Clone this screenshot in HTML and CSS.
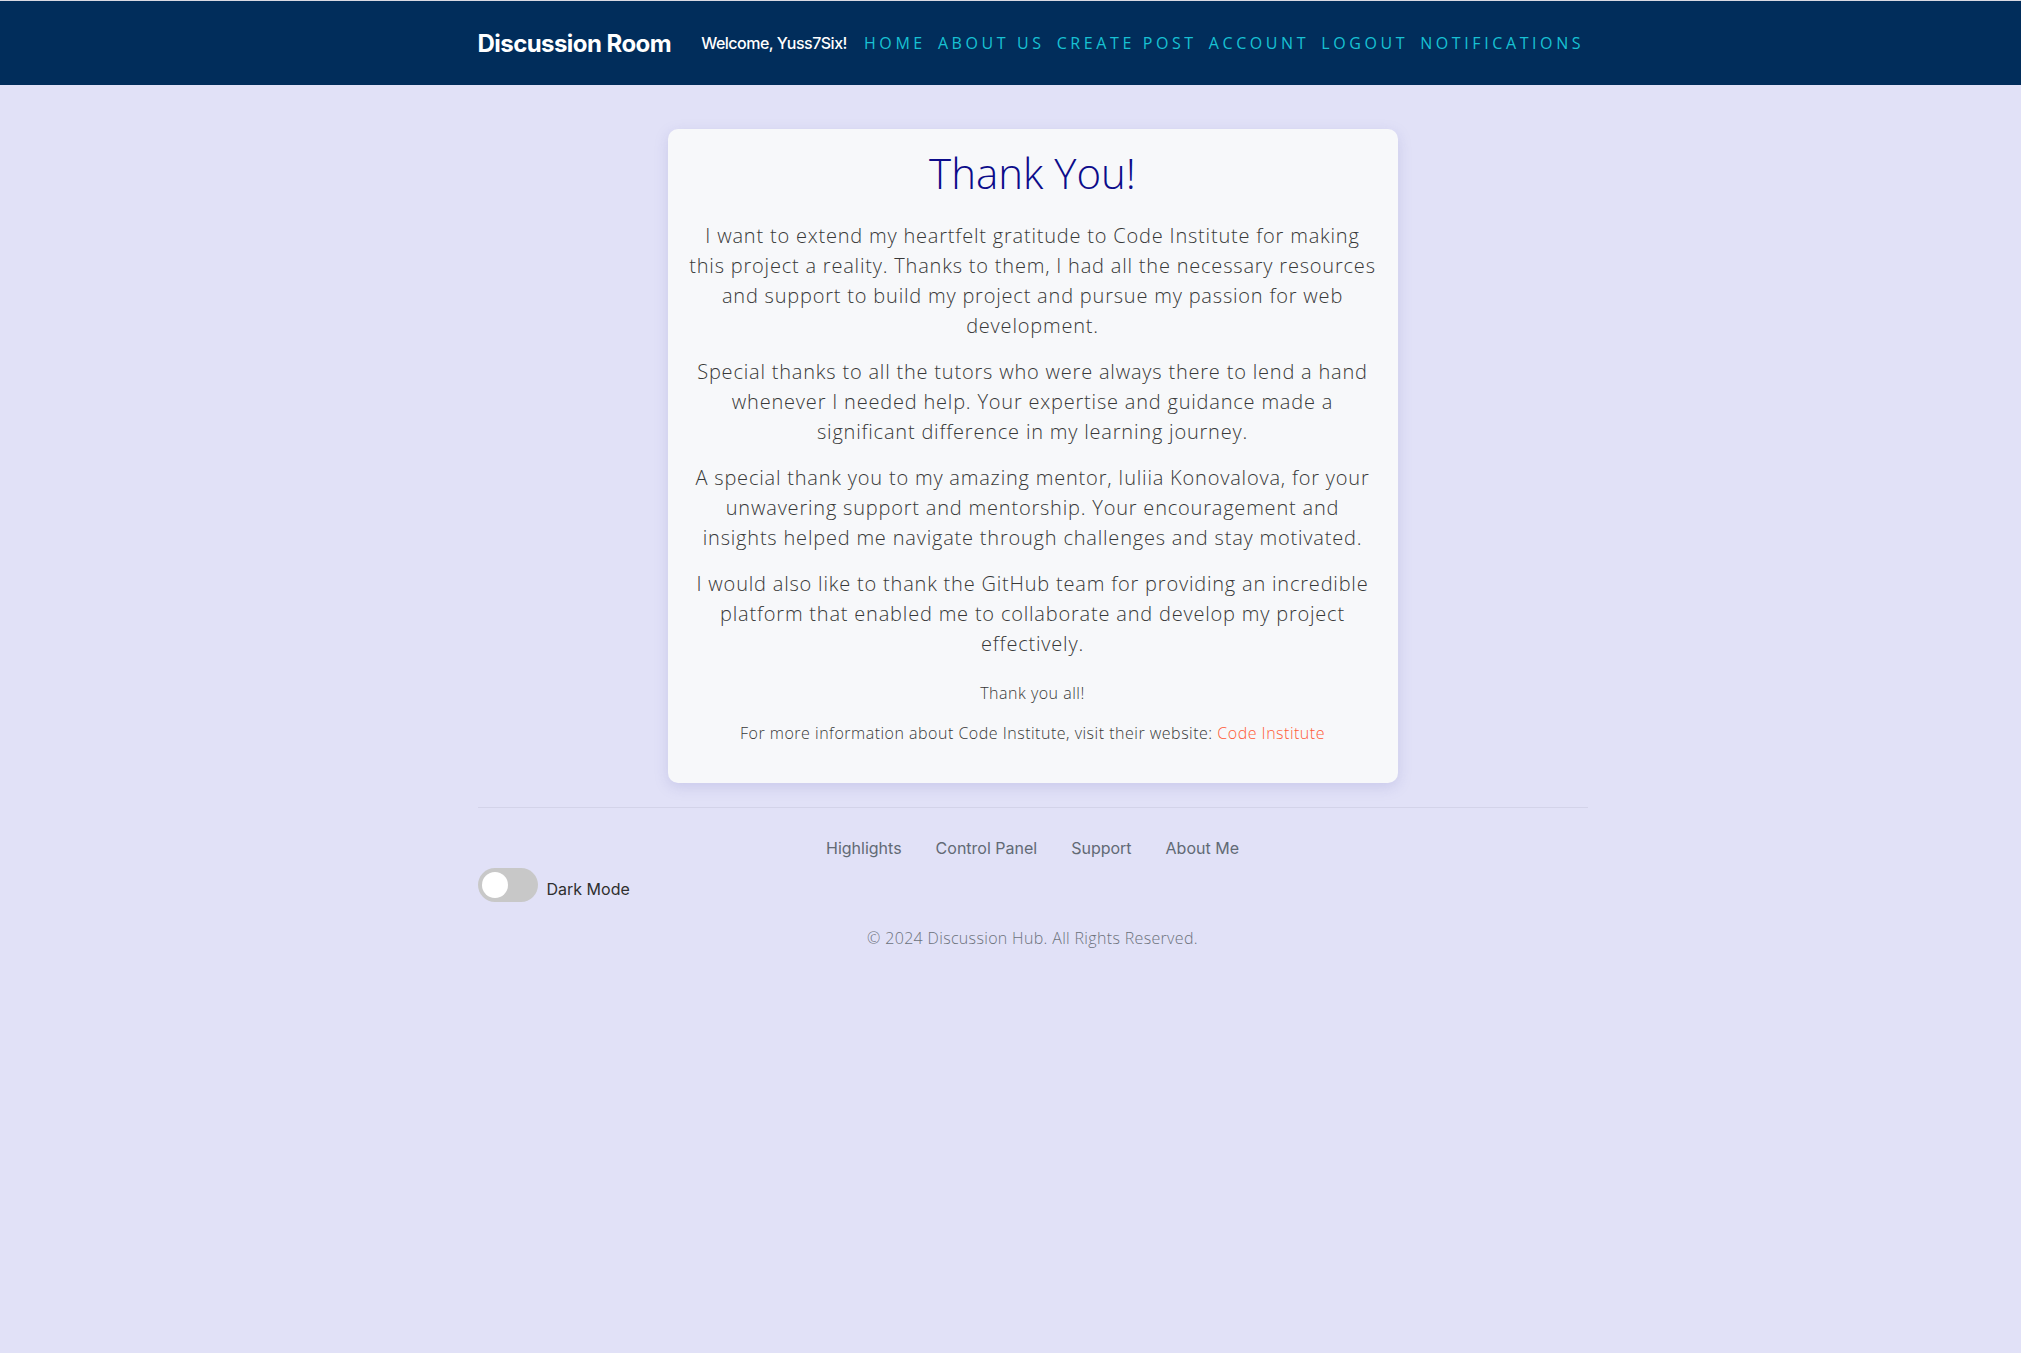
FILE: index.html
```html
<!DOCTYPE html>
<html lang="en">
<head>
<meta charset="utf-8">
<title>Thank You - Discussion Room</title>
<link rel="stylesheet" href="styles.css">
</head>
<body>
<header class="navbar">
  <div class="container nav-inner">
    <a class="brand" href="#">Discussion Room</a>
    <span class="welcome">Welcome, Yuss7Six!</span>
    <nav class="nav-links">
      <a href="#">Home</a>
      <a href="#">About Us</a>
      <a href="#">Create Post</a>
      <a href="#">Account</a>
      <a href="#">Logout</a>
      <a href="#">Notifications</a>
    </nav>
  </div>
</header>

<main class="container main">
  <section class="card">
    <h1 class="card-title">Thank You!</h1>
    <p class="lead">I want to extend my heartfelt gratitude to Code Institute for making this project a reality. Thanks to them, I had all the necessary resources and support to build my project and pursue my passion for web development.</p>
    <p class="lead">Special thanks to all the tutors who were always there to lend a hand whenever I needed help. Your expertise and guidance made a significant difference in my learning journey.</p>
    <p class="lead">A special thank you to my amazing mentor, Iuliia Konovalova, for your unwavering support and mentorship. Your encouragement and insights helped me navigate through challenges and stay motivated.</p>
    <p class="lead">I would also like to thank the GitHub team for providing an incredible platform that enabled me to collaborate and develop my project effectively.</p>
    <p class="small-text first">Thank you all!</p>
    <p class="small-text">For more information about Code Institute, visit their website: <a class="ci-link" href="#">Code Institute</a></p>
  </section>
</main>

<footer class="container footer">
  <hr class="footer-rule">
  <ul class="footer-links">
    <li><a href="#">Highlights</a></li>
    <li><a href="#">Control Panel</a></li>
    <li><a href="#">Support</a></li>
    <li><a href="#">About Me</a></li>
  </ul>
  <label class="dark-toggle">
    <span class="switch"><span class="knob"></span></span>
    <span class="toggle-label">Dark Mode</span>
  </label>
  <p class="copyright">© 2024 Discussion Hub. All Rights Reserved.</p>
</footer>
</body>
</html>
```

FILE: styles.css
```css
html {
  background: #e1e1f7;
}

body {
  margin: 0;
  min-height: 100vh;
  background: #e1e1f7;
  font-family: "Open Sans", "Liberation Sans", sans-serif;
  color: #333;
}

a {
  text-decoration: none;
}

.container {
  box-sizing: border-box;
  width: 1140px;
  padding: 0 15px;
  margin-left: calc(50% - 548px);
}

/* Navbar */
.navbar {
  background: #012d5b;
  border-top: 1px solid #d9d9e3;
  height: 84px;
}

.nav-inner {
  display: flex;
  align-items: center;
  height: 100%;
  white-space: nowrap;
}

.brand {
  flex-shrink: 0;
  font-family: Inter, "Liberation Sans", sans-serif;
  font-weight: 700;
  font-size: 24px;
  color: #fff;
  letter-spacing: -0.55px;
  margin-right: 30px;
}

.welcome {
  flex-shrink: 0;
  font-family: Inter, "Liberation Sans", sans-serif;
  font-weight: 500;
  font-size: 16px;
  letter-spacing: -0.5px;
  color: #fff;
  margin-right: 17px;
}

.nav-links {
  flex-shrink: 0;
  display: flex;
  gap: 12px;
}

.nav-links a {
  font-family: "Open Sans", "Liberation Sans", sans-serif;
  font-weight: 400;
  font-size: 16px;
  text-transform: uppercase;
  letter-spacing: 3.6px;
  color: #18c1d3;
}

/* Main card */
.main {
  padding-top: 44px;
  display: flex;
  justify-content: center;
}

.card {
  box-sizing: border-box;
  width: 730px;
  background: #f7f8fa;
  border-radius: 10px;
  padding: 20px 20px 22px;
  text-align: center;
  box-shadow: 0 4px 14px rgba(120, 120, 190, 0.22);
}

.card-title {
  margin: 0 0 24px;
  font-family: "Open Sans", "Liberation Sans", sans-serif;
  font-weight: 300;
  font-size: 42px;
  line-height: 48px;
  color: #0c0c8a;
}

.lead {
  margin: 0 0 16px;
  font-weight: 300;
  font-size: 20px;
  letter-spacing: 0.8px;
  line-height: 30px;
  color: #383838;
}

.small-text {
  margin: 0 0 16px;
  font-weight: 300;
  font-size: 16px;
  letter-spacing: 0.5px;
  line-height: 24px;
  color: #383838;
}

.small-text.first {
  margin-top: 22px;
}

.ci-link {
  color: #ff5a36;
}

/* Footer */
.footer {
  margin-top: 24px;
}

.footer-rule {
  margin: 0;
  border: 0;
  border-top: 1px solid #d3d3e9;
}

.footer-links {
  list-style: none;
  margin: 20px 0 0;
  padding: 0;
  display: flex;
  justify-content: center;
}

.footer-links a {
  display: block;
  padding: 8px 17px;
  font-family: Inter, "Liberation Sans", sans-serif;
  font-size: 16px;
  line-height: 24px;
  color: #626a75;
}

.dark-toggle {
  display: flex;
  align-items: flex-end;
  gap: 9px;
}

.switch {
  position: relative;
  width: 60px;
  height: 34px;
  border-radius: 17px;
  background: #c8c8c8;
}

.knob {
  position: absolute;
  left: 4px;
  top: 4px;
  width: 26px;
  height: 26px;
  border-radius: 50%;
  background: #fff;
}

.toggle-label {
  font-family: Inter, "Liberation Sans", sans-serif;
  font-size: 16px;
  line-height: 24px;
  color: #2f2f2f;
  padding-bottom: 1px;
}

.copyright {
  margin: 24px 0 0;
  text-align: center;
  font-weight: 300;
  font-size: 16px;
  letter-spacing: 0.33px;
  line-height: 24px;
  color: #6c727c;
}
```
